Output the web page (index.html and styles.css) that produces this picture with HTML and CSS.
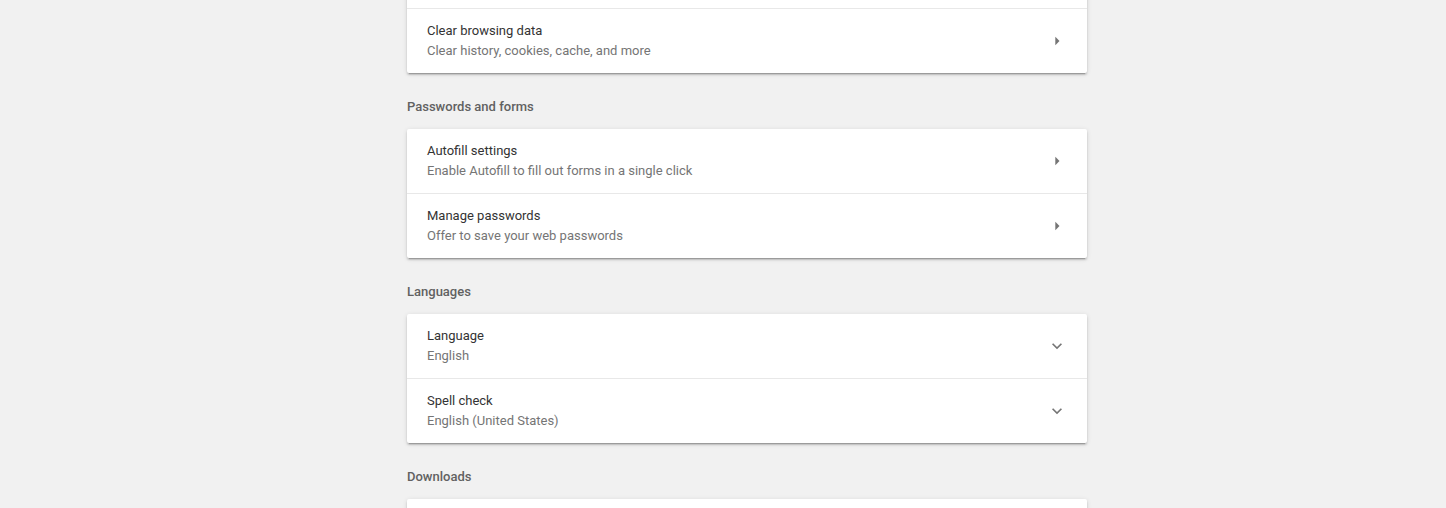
FILE: index.html
```html
<!DOCTYPE html>
<html>
<head>
<meta charset="utf-8">
<link rel="stylesheet" href="styles.css">
</head>
<body>
<div class="page">
  <main class="column">
    <section class="card first-card">
      <div class="row"></div>
      <div class="row">
        <div class="text">
          <div class="label">Clear browsing data</div>
          <div class="sub">Clear history, cookies, cache, and more</div>
        </div>
        <svg class="icon" viewBox="0 0 24 24"><path d="M10 17l5-5-5-5v10z"/></svg>
      </div>
    </section>

    <h2 class="section-title">Passwords and forms</h2>
    <section class="card">
      <div class="row">
        <div class="text">
          <div class="label">Autofill settings</div>
          <div class="sub">Enable Autofill to fill out forms in a single click</div>
        </div>
        <svg class="icon" viewBox="0 0 24 24"><path d="M10 17l5-5-5-5v10z"/></svg>
      </div>
      <div class="row">
        <div class="text">
          <div class="label">Manage passwords</div>
          <div class="sub">Offer to save your web passwords</div>
        </div>
        <svg class="icon" viewBox="0 0 24 24"><path d="M10 17l5-5-5-5v10z"/></svg>
      </div>
    </section>

    <h2 class="section-title">Languages</h2>
    <section class="card">
      <div class="row">
        <div class="text">
          <div class="label">Language</div>
          <div class="sub">English</div>
        </div>
        <svg class="icon" viewBox="0 0 24 24"><path d="M16.59 8.59L12 13.17 7.41 8.59 6 10l6 6 6-6z"/></svg>
      </div>
      <div class="row">
        <div class="text">
          <div class="label">Spell check</div>
          <div class="sub">English (United States)</div>
        </div>
        <svg class="icon" viewBox="0 0 24 24"><path d="M16.59 8.59L12 13.17 7.41 8.59 6 10l6 6 6-6z"/></svg>
      </div>
    </section>

    <h2 class="section-title">Downloads</h2>
    <section class="card">
      <div class="row"></div>
    </section>
  </main>
</div>
</body>
</html>
```
FILE: styles.css
```css
html, body {
  margin: 0;
  padding: 0;
  background: #f1f1f1;
  font-family: Roboto, "Liberation Sans", Arial, sans-serif;
  font-size: 13px;
  overflow: hidden;
  height: 508px;
}

.page {
  display: flex;
  justify-content: center;
  padding-left: 48px;
}

.column {
  width: 680px;
  display: flex;
  flex-direction: column;
  margin-top: -56px;
}

.card {
  background: #fff;
  border-radius: 2px;
  box-shadow: 0 2px 2px 0 rgba(0,0,0,0.14), 0 1px 5px 0 rgba(0,0,0,0.12), 0 3px 1px -2px rgba(0,0,0,0.2);
  display: flex;
  flex-direction: column;
}

.row {
  height: 64px;
  box-sizing: border-box;
  display: flex;
  align-items: center;
  padding: 0 20px;
}

.row + .row {
  height: 65px;
  border-top: 1px solid #e8e8e8;
}

.text {
  flex: 1;
  display: flex;
  flex-direction: column;
}

.label {
  color: #333;
  line-height: 20px;
}

.sub {
  color: #757575;
  line-height: 20px;
}

.icon {
  width: 20px;
  height: 20px;
  fill: #757575;
  flex: none;
}

.section-title {
  margin: 0;
  padding: 24px 0 12px;
  font-size: 13px;
  line-height: 20px;
  font-weight: 500;
  color: #616161;
}
```
